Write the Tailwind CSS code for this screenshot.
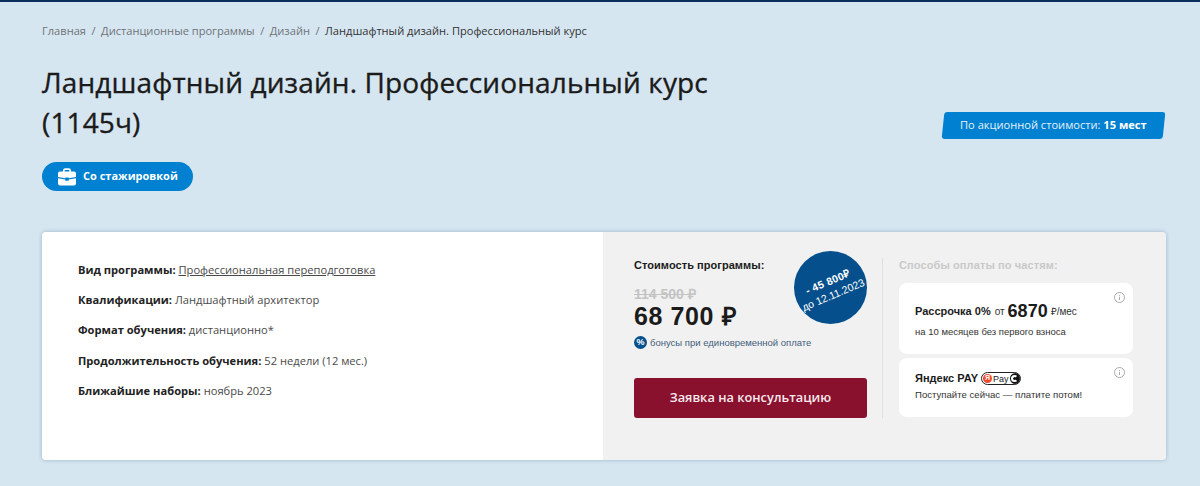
<!DOCTYPE html>
<html lang="ru">
<head>
<meta charset="utf-8">
<script src="https://cdn.jsdelivr.net/npm/@tailwindcss/browser@4"></script>
</head>
<body class="m-0 h-[486px] w-[1200px] overflow-hidden bg-[#d6e6f1] font-['Open_Sans',sans-serif]">
<div class="h-[2px] bg-[#0b2f5c]"></div>
<div class="pl-[42px] pr-[34px]">
  <nav class="flex h-[17px] mt-[20px] items-center text-[11.1px] leading-[17px] text-[#6f7478]">
    <span>Главная</span><span class="mx-[5.5px]">/</span><span>Дистанционные программы</span><span class="mx-[5.5px]">/</span><span>Дизайн</span><span class="mx-[5.5px]">/</span><span class="text-[#333]">Ландшафтный дизайн. Профессиональный курс</span>
  </nav>
  <div class="mt-[23px] flex items-start justify-between">
    <h1 class="w-[700px] text-[28px] leading-[40px] font-normal tracking-[0.12px] text-[#1b1b1b] [-webkit-text-stroke:0.35px_#1b1b1b]">Ландшафтный дизайн. Профессиональный курс (1145ч)</h1>
    <div class="mt-[50px] mr-[2px] flex h-[27px] w-[221px] -skew-x-[6deg] items-center justify-center rounded-[3px] bg-[#0080d0]">
      <span class="skew-x-[6deg] text-[11.1px] text-[#e6f2fb]">По акционной стоимости: <b class="font-bold text-white">15 мест</b></span>
    </div>
  </div>
  <div class="mt-[20px] flex h-[29px] w-[151px] items-center rounded-full bg-[#0080d0] pl-[15px]">
    <svg width="20" height="20" viewBox="0 0 20 20" fill="#fff"><path d="M6 5V3.500A2.200 2.200 0 0 1 8.200 1.300h3.600A2.200 2.200 0 0 1 14 3.500V5h-1.600V3.700a.8.8 0 0 0-.8-.8H8.400a.8.8 0 0 0-.8.8V5z"/><path d="M3 4.500h14A2 2 0 0 1 19 6.500V10l-7.300 1.300v-.8H8.300v.8L1 10V6.500A2 2 0 0 1 3 4.500z"/><path d="M1 11.300l7.300 1.300v1.200h3.400v-1.200l7.300-1.300V16.500a2 2 0 0 1-2 2H3a2 2 0 0 1-2-2z"/></svg>
    <span class="ml-[6px] text-[11px] font-bold text-white">Со стажировкой</span>
  </div>
  <section class="mt-[41px] flex h-[228px] w-[1124px] overflow-hidden rounded-[4px] shadow-[0_0_4px_rgba(90,120,150,0.45)]">
    <div class="w-[561px] bg-white pl-[36px] pt-[28px] text-[11.15px] text-[#4a4a4a]">
      <p class="h-[30.200px] leading-[20px]"><b class="font-bold text-[#222]">Вид программы:</b> <a class="underline">Профессиональная переподготовка</a></p>
      <p class="h-[30.200px] leading-[20px]"><b class="font-bold text-[#222]">Квалификации:</b> Ландшафтный архитектор</p>
      <p class="h-[30.200px] leading-[20px]"><b class="font-bold text-[#222]">Формат обучения:</b> дистанционно*</p>
      <p class="h-[30.200px] leading-[20px]"><b class="font-bold text-[#222]">Продолжительность обучения:</b> 52 недели (12 мес.)</p>
      <p class="h-[30.200px] leading-[20px]"><b class="font-bold text-[#222]">Ближайшие наборы:</b> ноябрь 2023</p>
    </div>
    <div class="relative flex flex-1 bg-[#f1f1f1] font-['Liberation_Sans',sans-serif]">
      <div class="w-[279px] pl-[31px] pt-[26px]">
        <div class="text-[11px] leading-[14px] font-bold tracking-[0.05px] text-[#1b1b1b]">Стоимость программы:</div>
        <div class="mt-[14px] text-[14px] leading-[16px] font-bold text-[#c4c4c4] line-through">114 500 ₽</div>
        <div class="text-[25px] leading-[28px] font-bold tracking-[0.6px] text-[#1b1b1b]">68 700 ₽</div>
        <div class="mt-[6px] flex items-center text-[9.500px] leading-[13px] text-[#44607c]">
          <span class="mr-[3px] flex h-[13px] w-[13px] items-center justify-center rounded-full bg-[#054f8c] text-[9px] font-bold text-white">%</span>бонусы при единовременной оплате
        </div>
        <button class="mt-[29px] h-[40px] w-[233px] rounded-[3px] bg-[#8a112e] font-['Open_Sans',sans-serif] text-[12.800px] font-semibold text-[#f6e8ec]">Заявка на консультацию</button>
      </div>
      <div class="absolute left-[191px] top-[19px] flex h-[73px] w-[73px] items-center justify-center rounded-full bg-[#054f8c] text-white">
        <div class="-rotate-[23deg] whitespace-nowrap text-center">
          <div class="text-[10.500px] leading-[14px] font-bold tracking-[0.3px]">- 45 800₽</div>
          <div class="text-[10.500px] leading-[14px]">до 12.11.2023</div>
        </div>
      </div>
      <div class="mt-[26px] h-[160px] w-px bg-[#dfdfdf]"></div>
      <div class="w-[234px] pl-[16px] pt-[26px]">
        <div class="text-[11px] leading-[14px] font-bold tracking-[0.1px] text-[#c9c9c9]">Способы оплаты по частям:</div>
        <div class="relative mt-[11px] h-[71px] w-[234px] rounded-[8px] bg-white pl-[16px] pt-[16px]">
          <svg class="absolute right-[8px] top-[9px]" width="11" height="11" viewBox="0 0 11 11" fill="none" stroke="#a9a9a9"><circle cx="5.500" cy="5.500" r="5"/><path d="M5.500 3v.8M5.500 4.800V8"/></svg>
          <div class="flex h-[24px] items-center text-[10px] text-[#333]"><b class="text-[11px] font-bold text-[#1b1b1b]">Рассрочка 0%</b><span class="ml-[4px]">от</span><b class="ml-[3px] text-[18px] font-bold text-[#1b1b1b]">6870</b><span class="ml-[3px]">₽/мес</span></div>
          <div class="mt-[3px] text-[9.500px] leading-[12px] text-[#333]">на 10 месяцев без первого взноса</div>
        </div>
        <div class="relative mt-[4px] h-[59px] w-[234px] rounded-[8px] bg-white pl-[16px] pt-[14px]">
          <svg class="absolute right-[8px] top-[9px]" width="11" height="11" viewBox="0 0 11 11" fill="none" stroke="#a9a9a9"><circle cx="5.500" cy="5.500" r="5"/><path d="M5.500 3v.8M5.500 4.800V8"/></svg>
          <div class="flex h-[13px] items-center text-[11px] font-bold text-[#1b1b1b]">Яндекс PAY
            <span class="ml-[3px] flex h-[13px] w-[40px] items-center overflow-hidden rounded-full border border-[#222] bg-white">
              <span class="ml-[1px] flex h-[9px] w-[9px] items-center justify-center rounded-full bg-[#f0492d] text-[7px] font-bold text-white">Я</span>
              <span class="ml-[1px] text-[9px] font-normal leading-[10px] tracking-normal text-[#222]">Pay</span>
              <span class="ml-[1px] flex h-full flex-1 items-center justify-center rounded-l-full bg-[#111]"><span class="h-[7px] w-[7px] rounded-full border-2 border-white border-r-transparent"></span></span>
            </span>
          </div>
          <div class="mt-[4px] text-[9.600px] leading-[12px] text-[#333]">Поступайте сейчас — платите потом!</div>
        </div>
      </div>
    </div>
  </section>
</div>
</body>
</html>
